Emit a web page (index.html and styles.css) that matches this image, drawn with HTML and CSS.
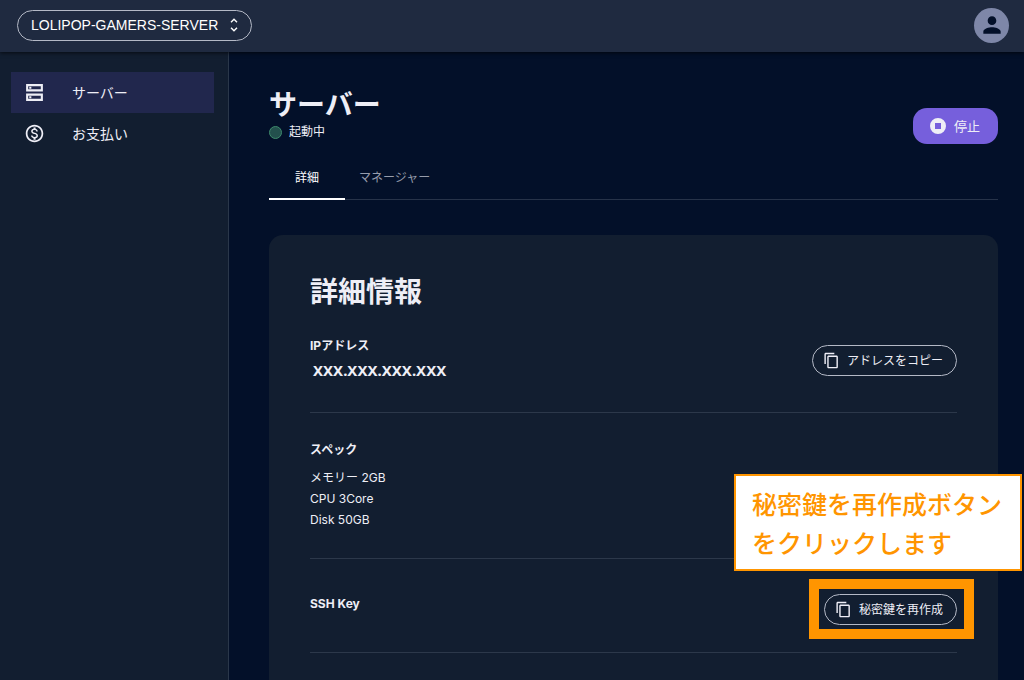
FILE: index.html
```html
<!DOCTYPE html>
<html lang="ja">
<head>
<meta charset="utf-8">
<meta name="viewport" content="width=device-width, initial-scale=1">
<title>サーバー</title>
<link rel="stylesheet" href="styles.css">
</head>
<body>
<header class="topbar">
  <button class="project" type="button">LOLIPOP-GAMERS-SERVER
    <svg class="project-icon" viewBox="0 0 8 14" aria-hidden="true"><path d="M1 4.2 4 1.2l3 3M1 9.8l3 3 3-3"/></svg>
  </button>
  <button class="avatar" type="button" aria-label="アカウント">
    <svg viewBox="0 0 24 24" aria-hidden="true"><path d="M12 12c2.21 0 4-1.79 4-4s-1.79-4-4-4-4 1.79-4 4 1.79 4 4 4zm0 2c-2.67 0-8 1.34-8 4v2h16v-2c0-2.66-5.33-4-8-4z"/></svg>
  </button>
</header>
<div class="shell">
  <nav class="sidebar">
    <a class="nav-item is-active" href="#server">
      <svg viewBox="0 0 20 20" aria-hidden="true"><path class="line" d="M3 3h14v5H3zM3 12h14v5H3z"/><path d="M5 4.5h2v2H5zM5 13.5h2v2H5z"/></svg>
      <span>サーバー</span>
    </a>
    <a class="nav-item" href="#payment">
      <svg viewBox="0 0 24 24" aria-hidden="true"><path d="M12 2C6.48 2 2 6.48 2 12s4.480 10 10 10 10-4.480 10-10S17.520 2 12 2zm0 18c-4.410 0-8-3.590-8-8s3.590-8 8-8 8 3.590 8 8-3.590 8-8 8zm.31-8.860c-1.770-.45-2.340-.94-2.340-1.670 0-.84.79-1.430 2.100-1.430 1.380 0 1.900.66 1.940 1.640h1.710c-.05-1.340-.87-2.570-2.490-2.970V5H10.900v1.690c-1.510.32-2.720 1.300-2.720 2.810 0 1.790 1.490 2.690 3.660 3.210 1.950.46 2.340 1.150 2.340 1.870 0 .53-.39 1.390-2.100 1.390-1.600 0-2.230-.72-2.320-1.640H8.040c.1 1.700 1.360 2.660 2.860 2.970V19h2.340v-1.670c1.520-.29 2.720-1.160 2.730-2.770-.01-2.200-1.900-2.960-3.660-3.420z"/></svg>
      <span>お支払い</span>
    </a>
  </nav>
  <main class="content">
    <div class="page-head">
      <div>
        <h1>サーバー</h1>
        <p class="status">起動中</p>
      </div>
      <button class="stop" type="button">
        <svg viewBox="0 0 20 20" aria-hidden="true"><path fill-rule="evenodd" d="M10 2a8 8 0 1 0 0 16 8 8 0 0 0 0-16zM7 7h6v6H7z"/></svg>
        停止
      </button>
    </div>
    <div class="tabs" role="tablist">
      <button class="tab is-active" type="button" role="tab" aria-selected="true">詳細</button>
      <button class="tab" type="button" role="tab" aria-selected="false">マネージャー</button>
    </div>
    <section class="card">
      <h2>詳細情報</h2>
      <div class="row address">
        <div>
          <h3>IPアドレス</h3>
          <p class="ip">XXX.XXX.XXX.XXX</p>
        </div>
        <button class="outline" type="button">
          <svg viewBox="0 0 24 24" aria-hidden="true"><path d="M16 1H4c-1.100 0-2 .9-2 2v14h2V3h12V1zm3 4H8c-1.100 0-2 .9-2 2v14c0 1.100.9 2 2 2h11c1.100 0 2-.9 2-2V7c0-1.100-.9-2-2-2zm0 16H8V7h11v14z"/></svg>
          アドレスをコピー
        </button>
      </div>
      <div class="row spec">
        <div>
          <h3>スペック</h3>
          <p>メモリー 2GB<br>CPU 3Core<br>Disk 50GB</p>
        </div>
      </div>
      <div class="row ssh">
        <h3>SSH Key</h3>
        <div class="target">
          <button class="outline" type="button">
            <svg viewBox="0 0 24 24" aria-hidden="true"><path d="M16 1H4c-1.100 0-2 .9-2 2v14h2V3h12V1zm3 4H8c-1.100 0-2 .9-2 2v14c0 1.100.9 2 2 2h11c1.100 0 2-.9 2-2V7c0-1.100-.9-2-2-2zm0 16H8V7h11v14z"/></svg>
            秘密鍵を再作成
          </button>
          <p class="callout">秘密鍵を再作成ボタン<br>をクリックします</p>
        </div>
      </div>
      <div class="row next">
        <h3>サーバーバージョン</h3>
      </div>
    </section>
  </main>
</div>
</body>
</html>
```
FILE: styles.css
```css
* { box-sizing: border-box; }
body {
  margin: 0;
  height: 100vh;
  display: flex;
  flex-direction: column;
  overflow: hidden;
  background: #031029;
  color: #eeeef6;
  font: 12px/20px Inter, "Noto Sans CJK JP", sans-serif;
}
h1, h2, h3, p { margin: 0; }
button { font: inherit; color: inherit; cursor: pointer; }
svg { fill: currentColor; flex: none; }

.topbar {
  display: flex;
  flex: none;
  align-items: center;
  justify-content: space-between;
  height: 52px;
  padding: 0 15px 2px 17px;
  background: #1f2a40;
  box-shadow: 0 1px 4px #000a;
  z-index: 1;
}
.project {
  display: flex;
  align-items: center;
  gap: 12px;
  height: 31px;
  padding: 0 13px;
  border: 1px solid #b4b9c6;
  border-radius: 16px;
  background: none;
  font: 14px/20px "Liberation Sans", Arial, sans-serif;
  color: #fff;
}
.project-icon { width: 8px; height: 14px; fill: none; stroke: currentColor; stroke-width: 1.4; }
.avatar {
  display: grid;
  place-items: center;
  width: 35px;
  height: 35px;
  padding: 0;
  border: 0;
  border-radius: 50%;
  background: #7e87a8;
  color: #031029;
}
.avatar svg { width: 26px; height: 26px; }

.shell { display: flex; flex: 1; min-height: 0; }
.sidebar {
  flex: none;
  width: 229px;
  padding: 20px 14px 0 11px;
  border-right: 1px solid #2a374a;
  background: #121e30;
}
.nav-item {
  display: flex;
  align-items: center;
  gap: 27px;
  height: 41px;
  padding-left: 13px;
  color: inherit;
  font-size: 14px;
  text-decoration: none;
}
.nav-item.is-active { background: #21274d; }
.nav-item svg { width: 21px; height: 21px; }
.nav-item .line { fill: none; stroke: currentColor; stroke-width: 2; }

.content { flex: 1; min-width: 0; padding: 34px 26px 0 40px; }
.page-head { display: flex; align-items: center; justify-content: space-between; }
h1 { font-size: 28px; line-height: 34px; }
.status { display: flex; align-items: center; gap: 7px; }
.status::before {
  content: "";
  width: 11px;
  height: 11px;
  border: 1px solid #3e8a6c;
  border-radius: 50%;
  background: #23504d;
}
.stop {
  display: flex;
  align-items: center;
  gap: 6px;
  height: 36px;
  margin-top: 22px;
  padding: 0 18px 0 15px;
  border: 0;
  border-radius: 14px;
  background: #765fdc;
  font-size: 13px;
}
.stop svg { width: 20px; height: 20px; }
.tabs { display: flex; margin-top: 14px; border-bottom: 1px solid #273349; }
.tab {
  height: 42px;
  margin-bottom: -1px;
  padding: 0 14px;
  border: 0;
  border-bottom: 2px solid transparent;
  background: none;
  color: #969cab;
}
.tab.is-active { padding: 0 26px; border-color: #fff; color: #fff; }

.card { margin-top: 35px; padding: 38px 41px; border-radius: 14px; background: #121e30; }
h2 { font-size: 28px; line-height: 38px; }
h3 { font-size: 12px; line-height: 20px; }
.row {
  display: flex;
  align-items: flex-start;
  justify-content: space-between;
  border-bottom: 1px solid #2c384a;
}
.address { padding: 25px 0 32px; }
.address .outline { margin-top: 9px; }
.ip { padding: 4px 3px 0; font: bold 15px/20px "Noto Sans", sans-serif; }
.spec { padding: 27px 0 28px; }
.spec p { margin-top: 7px; line-height: 21px; }
.ssh { padding: 35px 0 27px; }
.next { padding: 26px 0; }
.outline {
  display: flex;
  align-items: center;
  gap: 7px;
  height: 31px;
  padding: 0 13px 0 10px;
  border: 1px solid #b4b9c6;
  border-radius: 16px;
  background: none;
}
.outline svg { width: 17px; height: 17px; }
.target { position: relative; }
.target::after {
  content: "";
  position: absolute;
  inset: -15px -17px -14px -15px;
  border: 10px solid #ff9500;
  pointer-events: none;
}
.callout {
  position: absolute;
  right: -65px;
  bottom: 54px;
  padding: 8px 18px 7px 16px;
  border: 2px solid #ff9500;
  background: #fff;
  color: #ff9500;
  font: 500 25px/39px "Noto Sans CJK JP", sans-serif;
  white-space: nowrap;
}
```
